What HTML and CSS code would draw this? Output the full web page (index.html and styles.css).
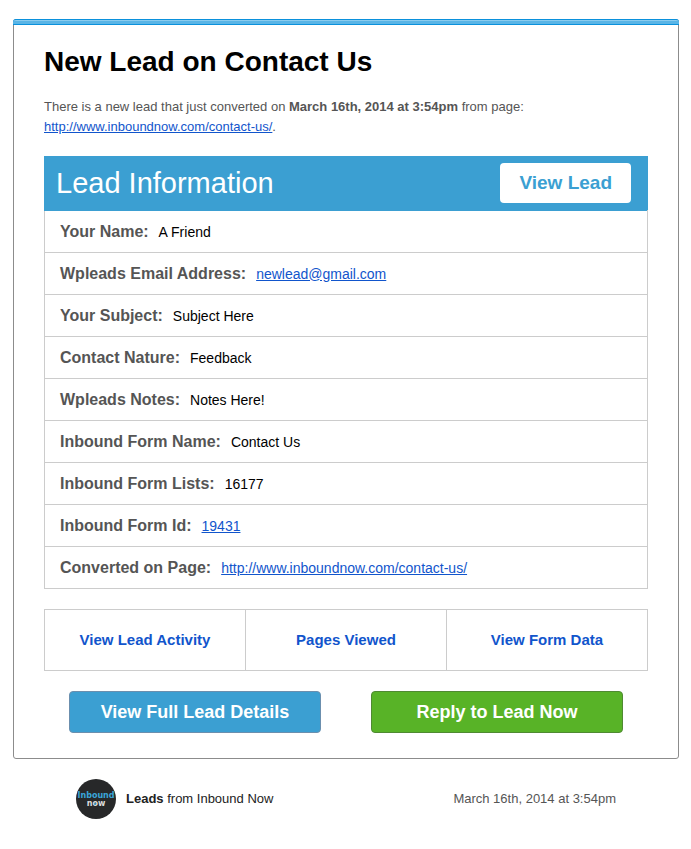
FILE: index.html
```html
<!DOCTYPE html>
<html lang="en">
<head>
<meta charset="utf-8">
<meta name="viewport" content="width=device-width, initial-scale=1">
<title>New Lead on Contact Us</title>
<link rel="stylesheet" href="styles.css">
</head>
<body>
<main class="card">
  <h1 class="title">New Lead on Contact Us</h1>
  <p class="intro">There is a new lead that just converted on <strong>March 16th, 2014 at 3:54pm</strong> from page: <br><a href="#">http://www.inboundnow.com/contact-us/</a>.</p>

  <section>
    <header class="lead-header">
      <h2 class="lead-heading">Lead Information</h2>
      <a class="view-lead" href="#">View Lead</a>
    </header>
    <table class="lead-table">
      <tbody>
        <tr><td><b>Your Name:</b><span>A Friend</span></td></tr>
        <tr><td><b>Wpleads Email Address:</b><a href="#">newlead@gmail.com</a></td></tr>
        <tr><td><b>Your Subject:</b><span>Subject Here</span></td></tr>
        <tr><td><b>Contact Nature:</b><span>Feedback</span></td></tr>
        <tr><td><b>Wpleads Notes:</b><span>Notes Here!</span></td></tr>
        <tr><td><b>Inbound Form Name:</b><span>Contact Us</span></td></tr>
        <tr><td><b>Inbound Form Lists:</b><span>16177</span></td></tr>
        <tr><td><b>Inbound Form Id:</b><a href="#">19431</a></td></tr>
        <tr><td><b>Converted on Page:</b><a href="#">http://www.inboundnow.com/contact-us/</a></td></tr>
      </tbody>
    </table>
  </section>

  <nav class="links">
    <a href="#">View Lead Activity</a>
    <a href="#">Pages Viewed</a>
    <a href="#">View Form Data</a>
  </nav>

  <div class="buttons">
    <a class="button button-blue" href="#">View Full Lead Details</a>
    <a class="button button-green" href="#">Reply to Lead Now</a>
  </div>
</main>

<footer class="footer">
  <svg class="logo" viewBox="0 0 40 40" role="img" aria-label="Inbound Now">
    <circle cx="20" cy="20" r="20" fill="#272829"/>
    <text class="logo-top" x="20" y="19" text-anchor="middle">Inbound</text>
    <text class="logo-bottom" x="20" y="27" text-anchor="middle">now</text>
    <circle cx="19" cy="25" r="1" fill="#3aa5d8"/>
  </svg>
  <span class="sender"><strong>Leads</strong> from Inbound Now</span>
  <time class="date">March 16th, 2014 at 3:54pm</time>
</footer>
</body>
</html>
```

FILE: styles.css
```css
*,
*::before {
  box-sizing: border-box;
}

body {
  margin: 0;
  padding: 19px 12px 0 13px;
  background: #fff;
  color: #555;
  font: 13px/20px "Liberation Sans", Arial, sans-serif;
}

a {
  color: #15c;
}

.card {
  position: relative;
  padding: 25px 30px 25px;
  border: 1px solid #8c8c8c;
  border-radius: 3px;
}

/* Highlight strip over the top edge of the card */
.card::before {
  content: "";
  position: absolute;
  top: -1px;
  left: -1px;
  right: -1px;
  height: 6px;
  border: solid #0b91dc;
  border-width: 1px 0;
  border-radius: 3px 3px 0 0;
  background: linear-gradient(#8accef 1px, #5ab5e6 1px);
}

.title {
  margin: 0;
  color: #000;
  font-size: 28px;
  line-height: 34px;
}

.intro {
  margin: 18px 0 19px;
}

.lead-header {
  display: flex;
  justify-content: space-between;
  align-items: center;
  height: 54px;
  padding: 0 17px 0 12px;
  background: #3b9fd2;
}

.lead-heading {
  margin: 0;
  color: #fff;
  font-size: 29px;
  font-weight: 400;
  line-height: 40px;
}

.view-lead {
  padding: 0 19px;
  border-radius: 4px;
  background: #fff;
  color: #3b9fd2;
  font-size: 19px;
  font-weight: 700;
  line-height: 40px;
  text-decoration: none;
}

.lead-table {
  width: 100%;
  border-collapse: collapse;
  color: #000;
  font-size: 14px;
}

.lead-table td {
  height: 42px;
  padding: 0 15px;
  border: 1px solid #ccc;
}

.lead-table tr:first-child td {
  border-top-color: #3b9fd2;
}

.lead-table b {
  margin-right: 10px;
  color: #555;
  font-size: 16px;
}

.links {
  display: flex;
  margin-top: 20px;
  border: 1px solid #ccc;
}

.links a {
  flex: 1;
  font-size: 15px;
  font-weight: 700;
  line-height: 60px;
  text-align: center;
  text-decoration: none;
}

.links a + a {
  border-left: 1px solid #ccc;
}

.buttons {
  display: grid;
  grid-template-columns: 1fr 1fr;
  gap: 50px;
  margin-top: 20px;
  padding: 0 25px;
}

.button {
  border: 1px solid;
  border-radius: 4px;
  color: #fff;
  font-size: 18px;
  font-weight: 700;
  line-height: 40px;
  text-align: center;
  text-decoration: none;
}

.button-blue {
  border-color: #6b8fae;
  background: #3b9fd2;
}

.button-green {
  border-color: #4f8a32;
  background: #58b327;
}

.footer {
  display: flex;
  align-items: center;
  gap: 10px;
  margin-top: 20px;
  padding: 0 63px;
}

.logo {
  width: 40px;
  height: 40px;
}

.logo-top,
.logo-bottom {
  font-family: "DejaVu Sans", sans-serif;
  font-size: 8px;
  font-weight: 700;
}

.logo-top {
  fill: #3aa5d8;
}

.logo-bottom {
  fill: #ddd;
}

.sender {
  color: #222;
}

.date {
  margin-left: auto;
}
```
